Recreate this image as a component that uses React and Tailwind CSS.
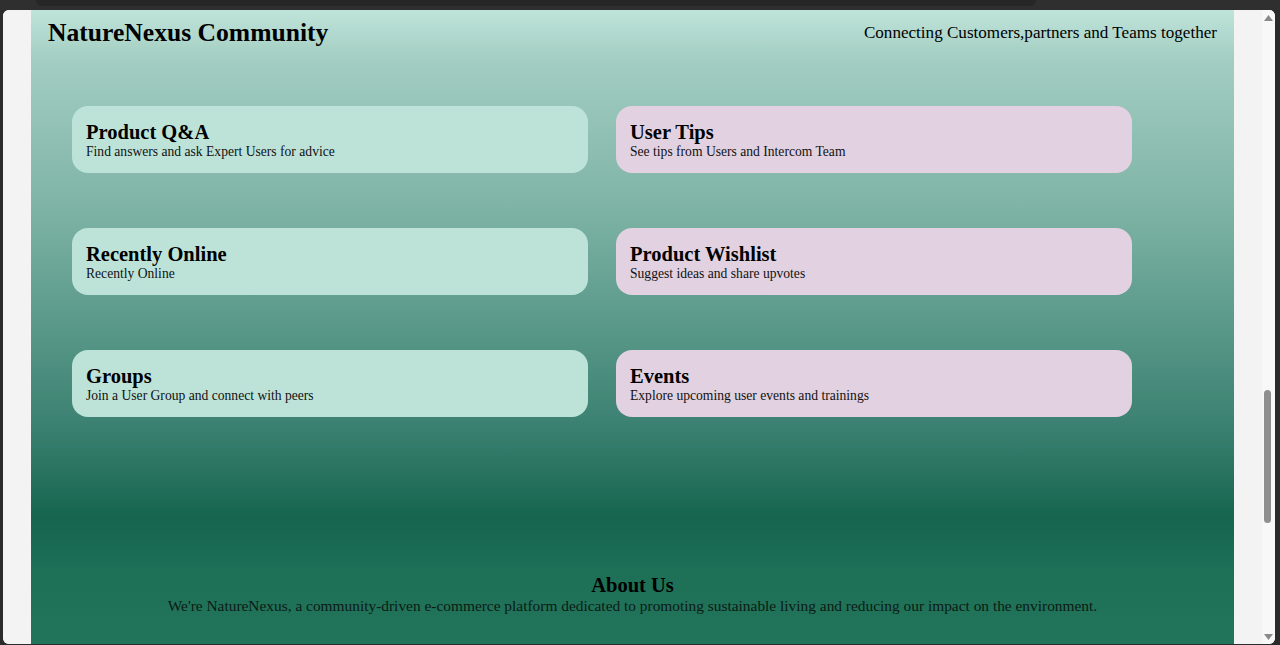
import React from 'react';

const CARDS = [
    { title: 'Product Q&A', text: 'Find answers and ask Expert Users for advice', tone: 'mint' },
    { title: 'User Tips', text: 'See tips from Users and Intercom Team', tone: 'lilac' },
    { title: 'Recently Online', text: 'Recently Online', tone: 'mint' },
    { title: 'Product Wishlist', text: 'Suggest ideas and share upvotes', tone: 'lilac' },
    { title: 'Groups', text: 'Join a User Group and connect with peers', tone: 'mint' },
    { title: 'Events', text: 'Explore upcoming user events and trainings', tone: 'lilac' },
];

const Card = ({ title, text, tone }) => (
    <div
        className={`h-[67px] rounded-[16px] px-[14px] pt-[14px] ${tone === 'mint' ? 'bg-[#bde3d9]' : 'bg-[#e2d1e0]'}`}
    >
        <h2 className="text-[20.5px] leading-[24px] font-bold text-black">{title}</h2>
        <p className="text-[13.6px] leading-[16px] text-[#111]">{text}</p>
    </div>
);

const App = () => {
    return (
        <div className="h-[645px] w-[1280px] overflow-hidden bg-[#2b2b2b] flex flex-col font-['Liberation_Serif',serif]">
            {/* browser chrome strip */}
            <div className="h-[10px] shrink-0 bg-[#2f2f2f] flex">
                <div className="ml-[36px] w-[1000px] h-[6px] rounded-b-[6px] bg-[#262626]" />
            </div>

            <div className="flex-1 flex ml-[3px] mr-[5px] mb-[1px] rounded-t-[6px] rounded-b-[6px] overflow-hidden bg-[#f3f3f3]">
                <div className="w-[28px] shrink-0 bg-[#f3f3f3]" />

                <main className="w-[1203px] shrink-0 flex flex-col bg-[linear-gradient(to_bottom,#bfe4da_0%,#a3cdc2_8%,#80b5a7_30%,#5b9a8b_49%,#3a8070_66%,#16654f_80%,#1d6f56_88%,#22745a_100%)]">
                    <header className="flex items-start justify-between pl-[17px] pr-[17px] pt-[7px]">
                        <h1 className="text-[25.6px] leading-[32px] font-bold text-black">NatureNexus Community</h1>
                        <p className="text-[17.1px] leading-[22px] pt-[5px] text-black">Connecting Customers,partners and Teams together</p>
                    </header>

                    <section className="grid grid-cols-[516px_516px] gap-x-[28px] gap-y-[55px] pl-[41px] mt-[57px]">
                        {CARDS.map((c) => (
                            <Card key={c.title} {...c} />
                        ))}
                    </section>

                    <section className="mt-[157px] text-center">
                        <h2 className="text-[20.5px] leading-[22px] font-bold text-black">About Us</h2>
                        <p className="text-[15.4px] leading-[19px] text-[#0c1a14]">
                            We're NatureNexus, a community-driven e-commerce platform dedicated to promoting sustainable living and reducing our impact on the environment.
                        </p>
                    </section>
                </main>

                <div className="w-[28px] shrink-0 bg-[#f3f3f3]" />

                {/* scrollbar */}
                <div className="w-[13px] shrink-0 bg-[#f8f8f8] flex flex-col items-center relative">
                    <svg width="9" height="6" viewBox="0 0 9 6" className="mt-[5px]">
                        <polygon points="4.5,0 9,6 0,6" fill="#8a8a8a" />
                    </svg>
                    <div className="absolute left-[2px] top-[380px] w-[7px] h-[133px] rounded-full bg-[#8f8f8f]" />
                    <svg width="9" height="6" viewBox="0 0 9 6" className="mt-auto mb-[4px]">
                        <polygon points="0,0 9,0 4.5,6" fill="#8a8a8a" />
                    </svg>
                </div>
            </div>
        </div>
    );
};

export default App;
